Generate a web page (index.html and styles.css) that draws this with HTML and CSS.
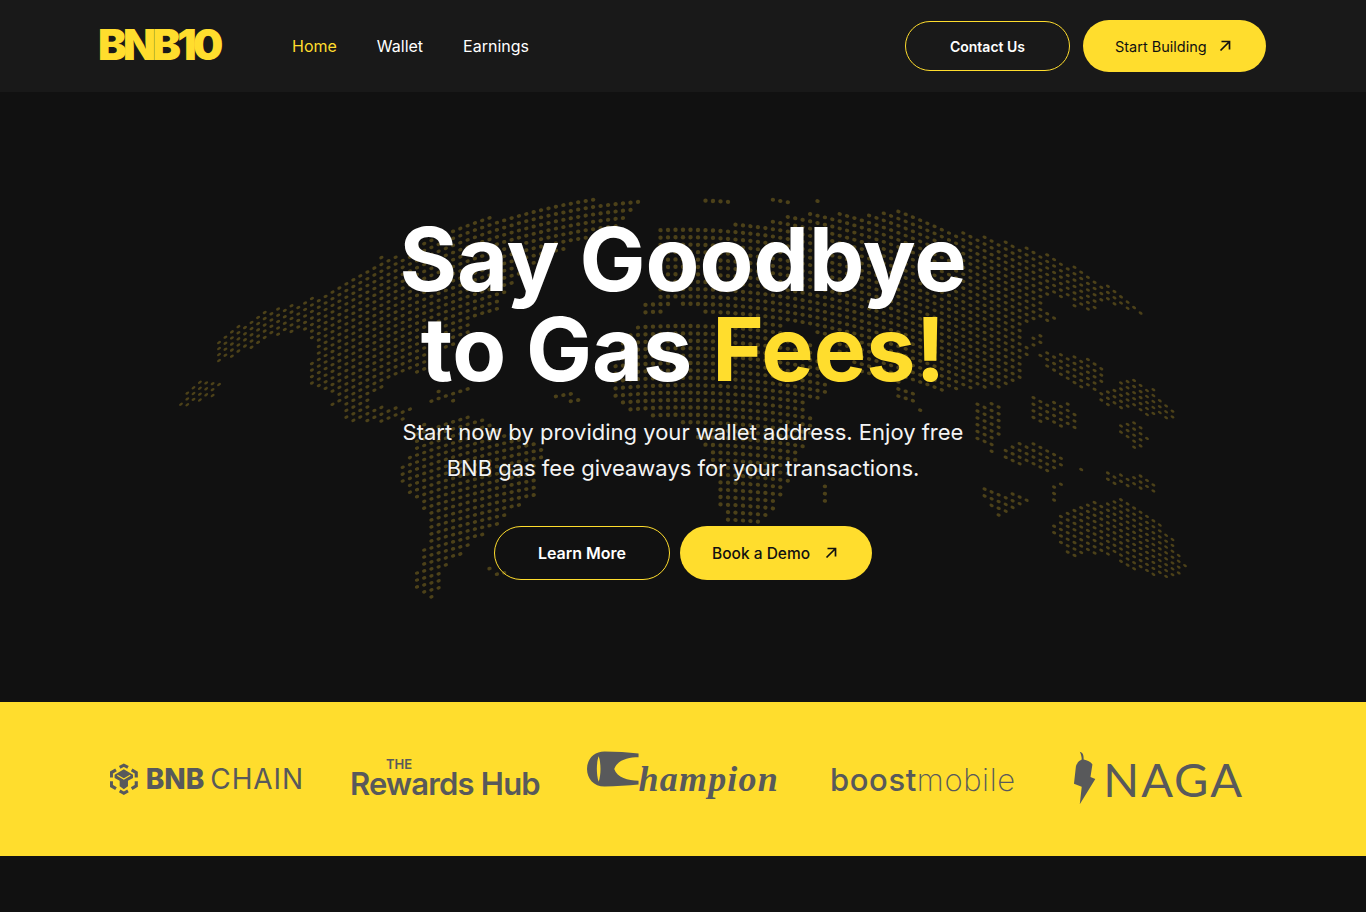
FILE: index.html
```html
<!DOCTYPE html>
<html lang="en">
<head>
  <meta charset="UTF-8" />
  <meta name="viewport" content="width=device-width, initial-scale=1.0"/>
  <title>BNB10</title>
  <link rel="stylesheet" href="styles.css">
</head>
<body>

  <header class="topbar">
    <a class="brand" href="#">BNB10</a>
    <nav class="nav">
      <a class="nav-link active" href="#">Home</a>
      <a class="nav-link" href="#">Wallet</a>
      <a class="nav-link" href="#">Earnings</a>
    </nav>
    <div class="top-actions">
      <a class="btn btn-outline btn-contact" href="#">Contact Us</a>
      <a class="btn btn-solid btn-start" href="#">Start Building
        <svg class="arrow" viewBox="0 0 12 12"><path d="M1.5 10.5 L10.5 1.5 M2.5 1.5 H10.5 V9.5"/></svg>
      </a>
    </div>
  </header>

  <section class="hero">
    <svg id="worldMap" class="world-map" viewBox="0 0 1366 610"></svg>
    <h1 class="hero-title">Say Goodbye<br>to Gas <span class="accent">Fees!</span></h1>
    <p class="hero-text">Start now by providing your wallet address. Enjoy free<br>BNB gas fee giveaways for your transactions.</p>
    <div class="hero-actions">
      <a class="btn btn-outline btn-learn" href="#">Learn More</a>
      <a class="btn btn-solid btn-demo" href="#">Book a Demo
        <svg class="arrow" viewBox="0 0 12 12"><path d="M1.5 10.5 L10.5 1.5 M2.5 1.5 H10.5 V9.5"/></svg>
      </a>
    </div>
  </section>

  <section class="partners">
    <div class="logo logo-bnb">
      <svg class="bnb-mark" viewBox="0 0 30 34">
        <path class="mark-line" d="M10.5 4.5 L15 2 L19.5 4.5 M23.5 7 L28.5 10 V15.5 M28.5 19.5 V24.5 L23.5 27.5 M19.5 30 L15 32.5 L10.5 30 M6.5 27.5 L1.5 24.5 V19.5 M1.5 15.5 V10 L6.5 7"/>
        <path class="mark-fill" d="M15 6.5 L25 12.5 V16 L19.5 19 V25 L15 28 L10.5 25 V19 L5 16 V12.5 Z"/>
        <path class="mark-cut" d="M8 13 L15 17 L22 13"/>
      </svg>
      <span class="bnb-bold">BNB</span><span class="bnb-light">CHAIN</span>
    </div>
    <div class="logo logo-rewards">
      <span class="rewards-the">THE</span>
      <span class="rewards-name">Rewards Hub</span>
    </div>
    <div class="logo logo-champion">
      <svg class="champ-mark" viewBox="0 0 53 36">
        <path class="mark-fill" fill-rule="evenodd" d="M18 0 C30 0 42 1 53 2 L53 6 C42 6 31 9 28 18 C31 27 42 30 53 30 L53 34 C42 35 30 36 18 36 C7 36 0 28 0 18 C0 8 7 0 18 0 Z M12 5 C9.5 12 9.5 24 12 31 C14.5 24 14.5 12 12 5 Z"/>
      </svg>
      <span class="champ-name">hampion</span>
    </div>
    <div class="logo logo-boost">
      <span class="boost-bold">boost</span><span class="boost-light">mobile</span>
    </div>
    <div class="logo logo-naga">
      <svg class="naga-mark" viewBox="0 0 24 56">
        <path class="mark-fill" d="M7 0 C11 1 11 5 11 8 C15 9 19 11 20 13 L18 26 L23 28 L7 54 L9 36 L1 33 L3 15 C4 11 7 9 9 8 C9 5 8 2 7 0 Z"/>
      </svg>
      <span class="naga-name">NAGA</span>
    </div>
  </section>

  <script src="map.js"></script>
</body>
</html>
```

FILE: styles.css
```css
body {
  margin: 0;
  background-color: #111111;
  font-family: "Inter", "Liberation Sans", sans-serif;
  color: #fff;
  height: 912px;
  overflow: hidden;
}
a {
  text-decoration: none;
  color: inherit;
}

.topbar {
  display: flex;
  align-items: center;
  height: 92px;
  padding: 0 100px;
  background-color: #191919;
}
.brand {
  width: 194px;
  margin-left: -2px;
  padding-bottom: 3px;
  font-size: 43px;
  font-weight: 900;
  letter-spacing: -3.8px;
  line-height: 1;
  color: #ffdd2d;
}
.nav {
  display: flex;
  gap: 40px;
}
.nav-link {
  font-size: 16px;
  font-weight: 400;
}
.nav-link.active {
  color: #ffdd2d;
}
.top-actions {
  display: flex;
  align-items: center;
  gap: 13px;
  margin-left: auto;
}

.btn {
  display: flex;
  align-items: center;
  box-sizing: border-box;
  border-radius: 30px;
}
.btn-outline {
  justify-content: center;
  border: 1px solid #ffdd2d;
  font-weight: 600;
  color: #fff;
}
.btn-solid {
  justify-content: space-between;
  background-color: #ffdd2d;
  color: #111;
}
.btn-contact {
  width: 165px;
  height: 50px;
  font-size: 14px;
}
.btn-start {
  width: 183px;
  height: 52px;
  padding: 0 35px 0 32px;
  font-size: 14.5px;
}
.btn-learn {
  width: 176px;
  height: 54px;
  font-size: 16px;
}
.btn-demo {
  width: 192px;
  height: 54px;
  padding: 0 35px 0 32px;
  font-size: 15.5px;
  font-weight: 500;
}
.arrow {
  width: 12px;
  height: 12px;
  fill: none;
  stroke: #111;
  stroke-width: 1.7;
}

.hero {
  position: relative;
  display: flex;
  flex-direction: column;
  align-items: center;
  height: 610px;
  padding-top: 122px;
  box-sizing: border-box;
  text-align: center;
}
.world-map {
  position: absolute;
  top: 0;
  left: 0;
  width: 1366px;
  height: 610px;
}
.world-map ellipse {
  fill: #4c4119;
}
.hero-title {
  position: relative;
  margin: 0;
  font-size: 88px;
  font-weight: 700;
  line-height: 90px;
  word-spacing: -1px;
}
.accent {
  color: #ffdd2d;
}
.hero-text {
  position: relative;
  margin: 20px 0 0;
  font-size: 22px;
  line-height: 36px;
  color: #f4f4f4;
}
.hero-actions {
  position: relative;
  display: flex;
  gap: 10px;
  margin-top: 40px;
}

.partners {
  display: flex;
  align-items: center;
  height: 154px;
  padding-left: 110px;
  background-color: #ffdd2d;
  color: #58595b;
}
.logo {
  display: flex;
  align-items: center;
  flex: none;
}
.mark-fill {
  fill: #58595b;
}
.mark-line {
  fill: none;
  stroke: #58595b;
  stroke-width: 3.4;
}
.mark-cut {
  fill: none;
  stroke: #ffdd2d;
  stroke-width: 1.2;
}
.logo-bnb {
  width: 194px;
}
.bnb-mark {
  width: 30px;
  height: 34px;
  margin-right: 8px;
}
.bnb-bold {
  font-size: 28px;
  font-weight: 800;
  margin-right: 6px;
}
.bnb-light {
  font-size: 28px;
  font-weight: 400;
  letter-spacing: 0.9px;
}
.logo-rewards {
  flex-direction: column;
  align-items: flex-start;
  width: 191px;
  margin-left: 46px;
  padding-bottom: 3px;
}
.rewards-the {
  margin-left: 36px;
  font-size: 13px;
  font-weight: 600;
  line-height: 12px;
}
.rewards-name {
  font-size: 31px;
  font-weight: 600;
  line-height: 27px;
  letter-spacing: -0.8px;
  white-space: nowrap;
}
.logo-champion {
  width: 192px;
  height: 56px;
  margin-left: 46px;
  align-items: flex-start;
}
.champ-mark {
  width: 53px;
  height: 36px;
}
.champ-name {
  margin-top: 5px;
  font-family: "Liberation Serif", serif;
  font-style: italic;
  font-weight: 700;
  font-size: 36px;
  letter-spacing: 1.2px;
  line-height: 46px;
}
.logo-boost {
  width: 185px;
  margin-left: 51px;
  font-size: 31px;
  letter-spacing: 0.6px;
}
.boost-bold {
  font-weight: 500;
}
.boost-light {
  font-weight: 200;
}
.logo-naga {
  width: 171px;
  margin-left: 58px;
}
.naga-mark {
  width: 24px;
  height: 56px;
  margin-right: 7px;
}
.naga-name {
  font-family: "Lato", sans-serif;
  font-size: 47px;
  font-weight: 400;
  letter-spacing: 2px;
}
```

FILE: map.js
```js
// dotted world map, land shapes traced in page pixels
const svgNS = "http://www.w3.org/2000/svg";
const map = document.getElementById("worldMap");

// west shapes measured from x=170, east shapes from x=680, both y=190, at 3x
function west(p) {
  return p.map(function (n, i) { return i % 2 ? 190 + n / 3 : 170 + n / 3; });
}
function east(p) {
  return p.map(function (n, i) { return i % 2 ? 190 + n / 3 : 680 + n / 3; });
}

const land = [
  // aleutians
  west([30,650, 45,598, 90,570, 155,578, 130,618, 75,645]),
  // north america + greenland
  west([128,470, 190,418, 280,362, 460,316, 490,288, 550,262, 640,195, 695,200, 760,150, 850,115, 930,85, 1050,72, 1120,52, 1200,32, 1425,20, 1375,85, 1340,110, 1215,165, 1130,195, 1000,315, 985,372, 905,395, 915,425, 820,485, 775,535, 655,572, 612,612, 592,645, 700,648, 735,660, 690,695, 600,695, 505,688, 518,650, 470,652, 500,612, 420,580, 405,538, 450,480, 392,420, 290,442, 210,495, 130,520]),
  // south america
  west([745,705, 910,678, 1000,718, 1135,775, 1100,840, 1092,928, 1012,972, 972,1012, 932,1042, 872,1092, 832,1122, 812,1182, 800,1222, 760,1220, 738,1195, 745,1078, 780,1050, 770,962, 730,925, 695,885, 695,820, 735,765]),
  west([935,1128, 1025,1150, 990,1162, 950,1150]),
  // caribbean bits
  west([795,600, 915,595, 860,632, 780,635]),
  west([1140,605, 1240,615, 1230,635, 1140,635]),
  // british isles
  west([1415,335, 1500,335, 1490,372, 1415,372]),
  // eurasia
  east([-70,115, 60,105, 260,100, 340,75, 440,68, 540,72, 650,55, 780,108, 940,145, 1080,182, 1210,242, 1340,318, 1395,375, 1320,352, 1200,322, 1060,320, 1115,362, 1135,405, 1050,385, 1020,430, 1045,482, 1025,560, 965,595, 810,605, 700,585, 560,560, 400,420, 300,385, 130,385, 0,340, -70,335]),
  east([60,25, 185,22, 150,48, 65,48]),
  east([275,22, 420,30, 415,42, 280,38]),
  // africa
  east([-110,395, 130,392, 300,400, 400,470, 452,620, 380,640, 412,722, 350,800, 330,880, 295,930, 272,995, 135,995, 110,905, 90,805, 25,700, -140,668, -205,625, -190,480]),
  east([415,880, 455,880, 440,942, 418,942]),
  // arabia + horn
  east([640,590, 705,590, 700,645, 655,625]),
  east([718,650, 730,650, 730,665, 718,665]),
  // india
  east([872,630, 975,640, 965,730, 935,800, 890,745]),
  // china coast
  east([1075,485, 1255,505, 1285,580, 1230,605, 1100,535]),
  // indochina
  east([1050,620, 1180,640, 1195,725, 1060,695]),
  east([1060,430, 1090,430, 1090,470, 1060,470]),
  east([1180,320, 1240,320, 1260,370, 1180,350]),
  // japan + korea
  east([1245,615, 1350,558, 1425,600, 1505,692, 1420,682, 1350,655, 1270,655]),
  // philippines
  east([1310,695, 1365,692, 1425,752, 1365,775, 1320,735]),
  // indonesia
  east([985,760, 1085,755, 1160,800, 1135,850, 1040,830, 960,800]),
  east([1180,835, 1225,820, 1220,850, 1185,850]),
  east([890,890, 1065,925, 965,990, 930,940]),
  east([1100,885, 1150,880, 1125,945, 1105,920]),
  // new guinea
  east([1260,845, 1410,860, 1435,915, 1350,890, 1280,880]),
  // australia + nz
  east([1095,1010, 1200,938, 1350,925, 1440,1005, 1480,1045, 1518,1130, 1480,1170, 1350,1135, 1290,1092, 1170,1100]),
];

function inside(x, y, p) {
  let hit = false;
  for (let i = 0, j = p.length - 2; i < p.length; j = i, i += 2) {
    if ((p[i + 1] > y) !== (p[j + 1] > y) &&
        x < (p[j] - p[i]) * (y - p[i + 1]) / (p[j + 1] - p[i + 1]) + p[i]) {
      hit = !hit;
    }
  }
  return hit;
}

const R = 900;
const curve = 0.00068;

for (let col = -75; col <= 75; col++) {
  const x = 683 + R * Math.sin(col * 7.5 / R);
  const dx = x - 683;
  const edge = Math.abs(dx) / 500;
  const rowGap = 7.4 * (1 - 0.22 * edge * edge);
  for (let row = -45; row <= 45; row++) {
    const y = 400 + row * rowGap + curve * dx * dx;
    if (!land.some(function (p) { return inside(x, y, p); })) continue;
    const dot = document.createElementNS(svgNS, "ellipse");
    const angle = Math.atan(2 * curve * dx) * 180 / Math.PI;
    dot.setAttribute("cx", x.toFixed(1));
    dot.setAttribute("cy", (y - 92).toFixed(1));
    dot.setAttribute("rx", 2.2);
    dot.setAttribute("ry", (2.2 - 0.95 * Math.min(edge, 1)).toFixed(2));
    dot.setAttribute("transform", "rotate(" + angle.toFixed(1) + " " + x.toFixed(1) + " " + (y - 92).toFixed(1) + ")");
    map.appendChild(dot);
  }
}
```
